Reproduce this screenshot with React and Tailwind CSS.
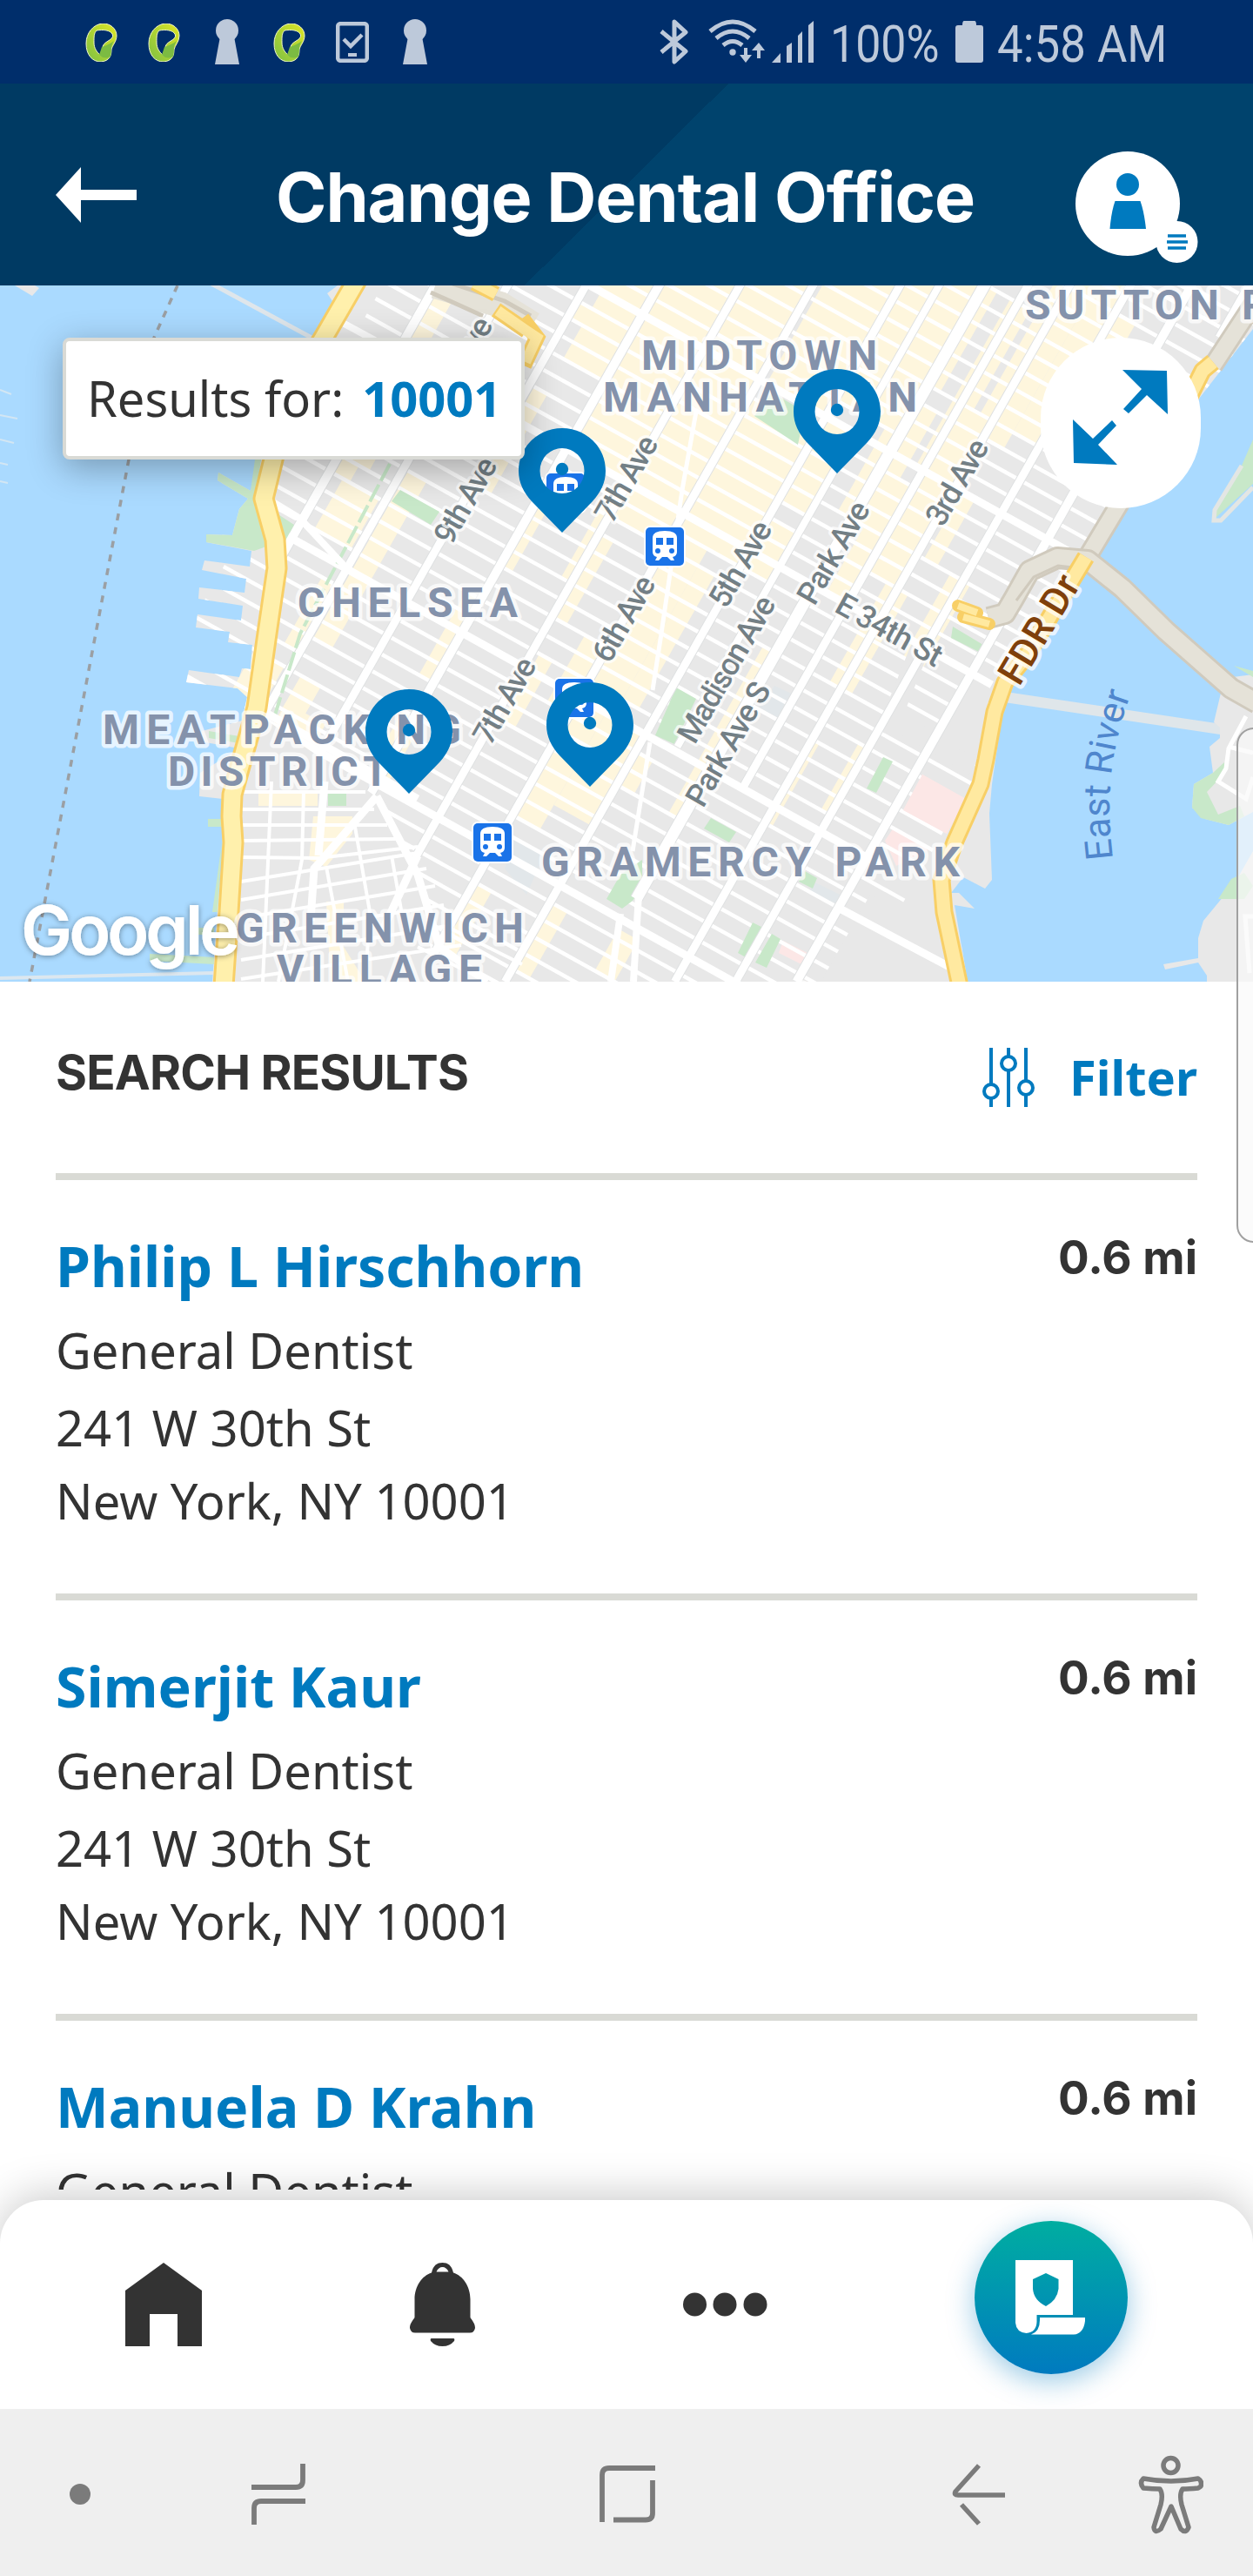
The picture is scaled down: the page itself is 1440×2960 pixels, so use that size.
import React from "react";

/* ---------- map geometry: a slanted street grid ---------- */

const AVE = 0.567;
const ST = 0.555;

function corner(ave, street) {
  const base = 263 + 25.3 * (34 - street);
  const y = (base + ST * (ave - 787)) / (1 + ST * AVE);
  return [ave - AVE * y, y];
}

function block(a1, a2, n1, n2) {
  return [corner(a1, n1), corner(a2, n1), corner(a2, n2), corner(a1, n2)]
    .map(([x, y]) => x.toFixed(1) + "," + y.toFixed(1))
    .join(" ");
}

const avenues = [
  [500, 310, 10], [583, 488, 9], [673, 540, 9], [757, 587, 10], [850, 800, 9],
  [934, 800, 9], [1034, 800, 9], [1079, 530, 8], [1131, 705, 13], [1181, 577, 9],
  [1229, 800, 9], [1299, 800, 9], [1369, 800, 10], [1435, 60, 9],
];

const minorStreets = Array.from({ length: 54 }, (_, i) => i + 8).filter(
  (n) => n !== 14 && n !== 23 && n !== 34 && n !== 42
);
const majorStreets = [14, 23, 34, 42, 57];

const commercial = [
  [505, 530, 27, 38], [520, 575, 24, 27], [512, 545, 28, 32], [545, 580, 30, 33], [590, 618, 19, 29],
  [530, 575, 14, 17], [560, 580, 18, 22], [600, 660, 13, 15.4], [600, 630, 15, 17],
  [673, 757, 42, 47], [695, 757, 38, 42], [673, 730, 40, 41], [680, 700, 30, 36],
  [757, 850, 34, 47], [757, 775, 27, 32], [735, 757, 20, 25], [740, 770, 14, 18],
  [850, 932, 32, 52], [850, 872, 26, 31], [860, 880, 20, 24], [900, 932, 22, 26], [835, 850, 28, 33],
  [932, 1030, 33, 41], [945, 1030, 42, 58], [932, 985, 23, 33], [932, 975, 16, 23], [975, 1034, 17.5, 23],
  [985, 1010, 24, 32], [1034, 1075, 33, 36], [1030, 1127, 43, 60], [1034, 1080, 37, 42], [1040, 1060, 20, 22],
  [1110, 1160, 38, 45], [1127, 1150, 46, 52], [1150, 1181, 34, 41], [1112, 1135, 20, 30], [1170, 1200, 42, 52],
  [1181, 1225, 36, 46], [1210, 1260, 45, 56], [1260, 1300, 46, 58], [1212, 1245, 30, 36], [1225, 1240, 22, 27],
  [1280, 1310, 33, 38], [1240, 1260, 38, 42], [1285, 1295, 24, 28], [1034, 1060, 9, 13], [1130, 1160, 11, 13.5],
  [1215, 1245, 6, 11], [930, 960, 8, 12], [1300, 1330, 46, 54],
];

const land =
  "388,0 376,9 382,18 360,58 330,120 300,200 288,236 251,215 250,224 285,245 275,257 267,287 237,286 237,295 289,305 287,323 235,316 232,327 283,337 281,353 229,347 228,360 279,368 277,385 227,378 225,393 264,398 262,410 290,413 288,441 278,440 275,450 217,442 214,456 273,463 284,473 278,500 232,512 230,524 275,532 230,560 229,587 256,590 256,613 239,613 239,622 255,622 256,650 250,715 244,800 1112,800 1097,712 1120,716 1102,698 1093,698 1107,680 1132,693 1140,683 1137,607 1140,573 1152,490 1163,460 1200,407 1240,335 1255,313 1290,257 1378,130 1440,50 1440,0";

const gridArea = "0,0 1440,0 1440,800 500,800 482,670 433,588 300,495 0,490";

function MapRoad({ d, w, fill, edge }) {
  return (
    <>
      <path d={d} fill="none" stroke={edge} strokeWidth={w} strokeLinejoin="round" />
      <path d={d} fill="none" stroke={fill} strokeWidth={w - 6} strokeLinejoin="round" />
    </>
  );
}

const halo = {
  stroke: "#ffffff",
  strokeOpacity: 0.72,
  strokeWidth: 9,
  strokeLinejoin: "round",
  paintOrder: "stroke",
};

function Area({ x, y, w, children }) {
  return (
    <text x={x} y={y} textLength={w} fontSize="48" fontWeight="700" fill="#8492ab" {...halo}>
      {children}
    </text>
  );
}

function Street({ x, y, r = -60, w, children }) {
  return (
    <text
      transform={`translate(${x} ${y}) rotate(${r})`}
      y="12"
      textAnchor="middle"
      textLength={w}
      fontSize="36"
      fontWeight="500"
      fill="#737f85"
      {...halo}
      strokeWidth="7"
    >
      {children}
    </text>
  );
}

function Station({ x, y }) {
  return (
    <g transform={`translate(${x} ${y})`}>
      <rect x="-2" y="-2" width="48" height="48" rx="7" fill="#fff" />
      <rect width="44" height="44" rx="5" fill="#1a73e8" />
      <path d="M8 12Q8 4 22 4t14 8v16q0 5-5 6l2 4h-4l-4-4h-6l-4 4h-4l2-4q-5-1-5-6z" fill="#fff" />
      <path d="M12 12h8v8h-8zM24 12h8v8h-8z" fill="#1a73e8" />
      <circle cx="14" cy="27" r="3" fill="#1a73e8" />
      <circle cx="30" cy="27" r="3" fill="#1a73e8" />
    </g>
  );
}

function Pin({ x, y }) {
  return (
    <g transform={`translate(${x} ${y})`} fill="#007abf">
      <path
        fillRule="evenodd"
        d="M50 0C77 0 100 21 100 49C100 63 94 74 85 84L50 120L15 84C6 74 0 63 0 49C0 21 23 0 50 0ZM50 23A25.5 26 0 1 0 50 75A25.5 26 0 1 0 50 23Z"
      />
      <circle cx="50" cy="47" r="7.2" />
    </g>
  );
}

function CityMap() {
  return (
    <svg className="block h-[800px] w-[1440px] font-['Roboto',sans-serif]" viewBox="0 0 1440 800">
      <defs>
        <clipPath id="land"><polygon points={land} /></clipPath>
        <clipPath id="grid"><polygon points={gridArea} /></clipPath>
        <path id="river" d="M1279 659C1272 600 1272 545 1300 468" />
        <filter id="soft" x="-10%" y="-20%" width="120%" height="150%">
          <feDropShadow dx="0" dy="1" stdDeviation="3" floodColor="#000" floodOpacity="0.4" />
        </filter>
      </defs>
      <rect width="1440" height="800" fill="#aadaff" />
      <path d="M17 0H40L45 3L37 12Z" fill="#e8e8e8" />
      <path d="M243-2L358 60" stroke="#dfe6eb" strokeWidth="5" />
      <path d="M0 120l13 5M0 149l20 4M0 177l16 4M0 204l9 2M0 225l9 2" stroke="#d3e6f3" strokeWidth="2" />
      <path d="M0 796L245 790" stroke="#dce7ef" strokeWidth="4" />
      <path d="M204 0L177 60L148 200L110 400L53 700L34 800" fill="none" stroke="#9b9fa3" strokeWidth="3.5" strokeDasharray="8 8" />
      <polygon points={land} fill="#e8e8e8" />

      <g clipPath="url(#land)">
        <g clipPath="url(#grid)">
          <g fill="#fef6dd">
            {commercial.map((b, i) => (
              <polygon key={i} points={block(b[0], b[1], b[2], b[3])} />
            ))}
          </g>
          <path d="M592 635L625 655L605 700L580 670ZM890 460L912 470L895 497L873 485ZM935 685L965 700V712L930 697Z" fill="#e2e7ea" />
          <g fill="#fce7e6">
            <path d="M1060 562L1110 590L1088 630L1038 603ZM1027 623L1070 647L1030 667L1017 638ZM900 753L930 768L925 782L895 767Z" />
          </g>
          <g stroke="#fff" strokeWidth="4.5">
            {minorStreets.map((n) => {
              const a = corner(440, n);
              const b = corner(n > 34 ? 1500 : 1440, n);
              return <line key={n} x1={a[0]} y1={a[1]} x2={b[0]} y2={b[1]} />;
            })}
          </g>
          <path d="M1058 415L1025 497L1120 552" fill="none" stroke="#e8e8e8" strokeWidth="22" />
          <path d="M1118 430L1140 440L1128 540L1066 525Z" fill="#e8e8e8" />
          <path d="M935 815L1000 700L1110 760V800Z" fill="#e8e8e8" />
          <path d="M1060 562L1110 590L1088 630L1038 603Z" fill="#fce7e6" />
          <path
            fill="#c8e8c9"
            d="M867 150L887 123L925 145L917 183ZM777 462L800 475L775 527L753 517ZM817 612L846 628L838 640L809 624ZM713 677L738 660V690L727 707L715 716L697 705ZM865 732L877 738L857 772L848 767ZM887 745L897 751L881 784L868 778ZM1015 542L1026 547L1007 583L996 578ZM1095 392L1130 413L1125 421L1093 405ZM460 235L505 260L495 275L450 248ZM925 673L939 681L934 693L918 685Z"
          />
          <g>
            {avenues.map(([a, y, w]) => (
              <line key={a} x1={a + 6} y1="-10" x2={a - AVE * y} y2={y} stroke="#dfe1e2" strokeWidth={w + 2} />
            ))}
            {avenues.map(([a, y, w]) => (
              <line key={a} x1={a + 6} y1="-10" x2={a - AVE * y} y2={y} stroke="#fff" strokeWidth={w} />
            ))}
          </g>
          <g stroke="#fff" strokeWidth="9">
            {majorStreets.map((n) => {
              const a = corner(450, n);
              const b = corner(1400, n);
              return <line key={n} x1={a[0]} y1={a[1]} x2={b[0]} y2={b[1]} />;
            })}
          </g>
          <path d="M800 145L784 235L760 400L750 465M747 525L727 650" fill="none" stroke="#fff" strokeWidth="5" />
          <path d="M713 722L702 800M734 700L728 800" fill="none" stroke="#fff" strokeWidth="8" />
          <path d="M967 717L1095 785" fill="none" stroke="#fff" strokeWidth="9" />
          <path d="M448 205L345 400L314 500" fill="none" stroke="#c8e8c9" strokeWidth="4" strokeDasharray="22 5" />
        </g>

        {/* west village */}
        <path d="M297 582H365V598H297ZM360 610H405V630L375 668L355 660ZM375 708H395V760L420 800H380Z" fill="#fef6dd" />
        <rect x="377" y="584" width="21" height="14" fill="#c8e8c9" />
        <g fill="none" stroke="#fff" strokeWidth="4">
          <path d="M277 582H420M277 602H430M277 620H445M277 638L455 636M277 657L365 658L480 645M277 685L480 652M277 706L490 670M277 727L500 690M277 750L510 712M277 775L520 735M277 797L530 758" />
          <path d="M312 570L302 800M349 580L347 660L320 800M375 668L400 800M408 622L425 720L420 800M450 655L465 740M480 760L560 800M520 740L600 780" />
        </g>
        <g fill="none" stroke="#fff" strokeWidth="9">
          <path d="M433 587L480 677L505 760L560 800M433 587L370 660L361 670L357 730M373 570L366 655M480 655L440 740" />
          <path d="M300 488L380 533L480 590" />
        </g>
      </g>

      <path d="M285 245L275 257L267 287L237 286V295L292 305L306 300L303 280L293 250L300 200H293L288 236L251 215L250 224Z" fill="#c8e8c9" />
      <path d="M315 260L338 275L328 293L322 290ZM239 613H256V622H239ZM240 512L275 518V526L240 520ZM218 738H246V746H218ZM172 768L246 772V780L172 776ZM255 640L250 720L244 720Z" fill="#c8e8c9" />
      <path d="M312 248L345 268L400 327" fill="none" stroke="#fff" strokeWidth="8" strokeLinejoin="round" />
      <path d="M392 42L440 68" stroke="#fff" strokeWidth="8" />
      <MapRoad d="M410-6L373 58L330 130L314 200L303 245L316 292L318 325L307 400L295 485L278 545L267 585L266 610L268 640L263 720L257 805" w={25} fill="#fff0ac" edge="#f8cf66" />

      {/* tunnel ramps */}
      <path d="M500 0L575 22L612 45" fill="none" stroke="#e5e2d8" strokeWidth="30" />
      <path d="M495 8L555 35M520-2L580 18L610 35" fill="none" stroke="#d0cabd" strokeWidth="5" />
      <path d="M545-3L570 10M570 28L605 52M600 38L617 60L602 92" fill="none" stroke="#f8cf66" strokeWidth="18" />
      <path d="M545-3L570 10M572 29L605 52L617 60L604 88" fill="none" stroke="#ffe9a0" strokeWidth="12" />

      {/* east side */}
      <path d="M1155 473L1410 511" stroke="#dfe6ea" strokeWidth="12" />
      <path d="M1440 447L1417 450L1405 460L1395 502L1402 508V520L1390 530L1394 560L1372 573L1370 600L1385 613L1412 620L1440 605ZM1440 650L1420 685L1383 730L1377 750V773L1337 780L1339 786L1377 778L1387 793V800H1440Z" fill="#e8e8e8" />
      <path d="M1407 548L1394 560L1372 573L1370 600L1380 612L1412 620L1430 610L1425 598L1400 608L1387 582L1408 560ZM1415 682L1430 675L1440 690L1430 705L1400 705ZM1418 437L1440 443V450ZM1440 177L1427 207L1395 262L1396 268L1440 228Z" fill="#c8e8c9" />
      <path d="M1427 207L1396 258L1395 270H1403L1440 232" fill="none" stroke="#e3e6e4" strokeWidth="5" />
      <path d="M1432 495L1412 532L1409 555L1400 570L1432 590L1440 565M1412 530L1440 537M1440 725H1431L1436 790" fill="none" stroke="#fff" strokeWidth="5" />
      <MapRoad d="M1440 22L1394 92M1290 245L1248 315" w={24} fill="#e5e2d8" edge="#d0cabd" />
      <MapRoad d="M1394 88L1382 98L1366 130" w={21} fill="#ffe9a0" edge="#f8cf66" />
      <MapRoad d="M1136 382L1155 377L1165 360L1183 328L1215 313L1250 316L1290 348L1340 397L1415 463L1445 480" w={26} fill="#e5e2d8" edge="#d0cabd" />
      <path d="M1168 362L1188 335L1216 322L1250 326" fill="none" stroke="#d0cabd" strokeWidth="3" />
      <MapRoad d="M1248 312L1180 425L1155 456L1143 490L1133 545L1127 573L1097 640L1082 683L1085 720L1103 805" w={21} fill="#ffe9a0" edge="#f8cf66" />
      <path d="M1101 368L1123 376M1107 381L1137 389" stroke="#f8cf66" strokeWidth="14" strokeLinecap="round" />
      <path d="M1101 368L1123 376M1107 381L1137 389" stroke="#ffe9a0" strokeWidth="8" />

      <Street x={530} y={86} w={108}>9th Ave</Street>
      <Street x={535} y={247} w={108}>9th Ave</Street>
      <Street x={720} y={222} w={108}>7th Ave</Street>
      <Street x={851} y={320} w={108}>5th Ave</Street>
      <Street x={717} y={383} w={108}>6th Ave</Street>
      <Street x={958} y={307} w={130}>Park Ave</Street>
      <Street x={1100} y={226} w={108}>3rd Ave</Street>
      <Street x={580} y={477} w={108}>7th Ave</Street>
      <Street x={835} y={441} w={188}>Madison Ave</Street>
      <Street x={837} y={527} w={158}>Park Ave S</Street>
      <Street x={898} y={848} w={108}>1st Ave</Street>
      <Street x={1022} y={396} r={29} w={134}>E 34th St</Street>
      <text transform="translate(1194 395) rotate(-59)" y="15" textAnchor="middle" textLength="138" fontSize="44" fontWeight="500" fill="#7f400b" {...halo}>
        FDR Dr
      </text>
      <text fontSize="43" fill="#4f86cd" letterSpacing="0.3">
        <textPath href="#river">East River</textPath>
      </text>

      <Area x={1178} y={39} w={280}>SUTTON P</Area>
      <Area x={737} y={97} w={271}>MIDTOWN</Area>
      <Area x={693} y={145} w={361}>MANHATTAN</Area>
      <Area x={342} y={381} w={253}>CHELSEA</Area>
      <Area x={118} y={527} w={412}>MEATPACKING</Area>
      <Area x={193} y={575} w={254}>DISTRICT</Area>
      <Area x={622} y={679} w={481}>GRAMERCY PARK</Area>
      <Area x={271} y={755} w={331}>GREENWICH</Area>
      <Area x={318} y={803} w={236}>VILLAGE</Area>

      <Station x={628} y={216} />
      <Station x={742} y={278} />
      <Station x={638} y={452} />
      <Station x={544} y={618} />
      <Pin x={596} y={164} />
      <Pin x={912} y={96} />
      <Pin x={628} y={456} />
      <Pin x={420} y={464} />

      <text x="24" y="769" textLength="252" fontSize="79" fontWeight="600" fill="#fff" filter="url(#soft)" className="font-['Inter',sans-serif]">
        Google
      </text>
    </svg>
  );
}

/* ---------- status bar ---------- */

function RibbonIcon() {
  return (
    <svg className="h-[44px] w-[37px]" viewBox="0 0 37 44">
      <defs>
        <linearGradient id="lime" x1="0" y1="1" x2="1" y2="0">
          <stop offset="0" stopColor="#7cc043" />
          <stop offset="1" stopColor="#e0e625" />
        </linearGradient>
      </defs>
      <path
        d="M20 0C9 1 1 11 1 23C1 36 8 44 18 44C28 43 30 37 30 30C31 25 36 21 36 14C36 6 29 0 20 0ZM13 8C20 7 29 7 31.500 13C33 20 19 20 20 29C20 34 21 37 18 37C13 33 10 28 10 22C10 15 10 11 13 8Z"
        fillRule="evenodd"
        fill="url(#lime)"
        stroke="#f1f7c8"
        strokeWidth="1"
      />
      <path d="M19 27L16 36Q22 42 29 38C31 32 28 28 33 20Q28 24 19 27Z" fill="#7cbb42" />
    </svg>
  );
}

function KeyholeIcon() {
  return (
    <svg className="h-[52px] w-[28px]" viewBox="0 0 28 52" fill="#bdc9da">
      <circle cx="14" cy="13" r="13" />
      <path d="M6 20H22L28 52H0Z" />
    </svg>
  );
}

function StatusBar() {
  return (
    <div className="flex h-[96px] items-start bg-[#002e6b] pl-[98px] text-[#bdc9da]">
      <div className="flex w-[660px] items-start">
        <div className="mt-[27px]"><RibbonIcon /></div>
        <div className="mt-[27px] ml-[35px]"><RibbonIcon /></div>
        <div className="mt-[22px] ml-[40px]"><KeyholeIcon /></div>
        <div className="mt-[27px] ml-[39px]"><RibbonIcon /></div>
        <svg className="mt-[25px] ml-[35px] h-[47px] w-[38px]" viewBox="0 0 38 47" fill="none" stroke="#bdc9da" strokeWidth="4.5">
          <rect x="2.2" y="2.2" width="33.6" height="42.6" rx="3" />
          <path d="M9 20L17 28L30 15" />
          <path d="M14 38H24" strokeWidth="4" />
        </svg>
        <div className="mt-[22px] ml-[39px]"><KeyholeIcon /></div>
      </div>
      <svg className="mt-[22px] h-[52px] w-[34px]" viewBox="0 0 34 52" fill="none" stroke="#bdc9da" strokeWidth="5">
        <path d="M2 14L30 37L17 49V3L30 15L2 38" strokeLinejoin="round" />
      </svg>
      <svg className="mt-[22px] ml-[20px] h-[52px] w-[70px]" viewBox="0 0 70 52" fill="none" stroke="#bdc9da" strokeWidth="5">
        <path d="M4 14Q30-8 56 14M11 22Q30 6 49 22M19 30Q30 21 41 30" />
        <circle cx="30" cy="38" r="3.7" fill="#bdc9da" stroke="none" />
        <path d="M45 33V46M60 45V32" strokeWidth="4" />
        <path d="M38 41H52L45 50ZM52 36H67L60 27Z" fill="#bdc9da" stroke="none" />
      </svg>
      <svg className="mt-[24px] ml-[5px] h-[48px] w-[50px]" viewBox="0 0 50 48" fill="#bdc9da">
        <path d="M0 48L10 37V48ZM17 29L23 25V48H17ZM30 17L35 12V48H30ZM42 5L48 0V48H42Z" />
      </svg>
      <div className="mt-[16px] ml-[17px] w-[144px]">
        <span className="inline-block origin-left scale-x-[0.865] font-['Roboto',sans-serif] text-[60px] leading-[70px] whitespace-nowrap">100%</span>
      </div>
      <svg className="mt-[24px] h-[48px] w-[32px]" viewBox="0 0 32 48" fill="#bdc9da">
        <path d="M10 0H22Q24 0 24 5H29Q32 5 32 8V45Q32 48 29 48H3Q0 48 0 45V8Q0 5 3 5H8Q8 0 10 0Z" />
      </svg>
      <div className="mt-[16px] ml-[16px] w-[200px]">
        <span className="inline-block origin-left scale-x-[0.88] font-['Roboto',sans-serif] text-[60px] leading-[70px] whitespace-nowrap">4:58 AM</span>
      </div>
    </div>
  );
}

function Header() {
  return (
    <header className="flex h-[232px] items-start bg-[linear-gradient(135.3deg,#003a63_50%,#00436d_50%)] pl-[64px]">
      <svg className="mt-[96px] h-[64px] w-[93px]" viewBox="0 0 93 64" fill="#fff">
        <path d="M0 32L29 0V26H93V38H29V64Z" />
      </svg>
      <h1 className="mt-[85px] ml-[160px] w-[919px] font-['Inter',sans-serif] text-[79px] leading-[90px] font-bold tracking-[-1px] whitespace-nowrap text-white">
        Change Dental Office
      </h1>
      <svg className="mt-[78px] h-[130px] w-[142px] shrink-0" viewBox="0 0 142 130">
        <circle cx="60" cy="60" r="60" fill="#fff" />
        <circle cx="60" cy="38" r="13" fill="#007abf" />
        <path d="M45.500 57H74.500Q79 70 81 89H39.500Q41 70 45.500 57Z" fill="#007abf" />
        <circle cx="116.500" cy="104" r="24" fill="#fff" />
        <path d="M106 97H127M105 104H129M106 111H127" stroke="#007abf" strokeWidth="3.700" />
      </svg>
    </header>
  );
}

const dentists = [
  { name: "Philip L Hirschhorn", distance: "0.6 mi" },
  { name: "Simerjit Kaur", distance: "0.6 mi" },
  { name: "Manuela D Krahn", distance: "0.6 mi" },
];

function DentistRow({ name, distance }) {
  return (
    <li className="flex h-[483px] shrink-0 items-start justify-between border-t-8 border-[#d9dad5] pt-[56px]">
      <div className="text-[56.1px] leading-[84px] text-[#333333]">
        <h3 className="text-[64.4px] leading-[84px] font-bold text-[#007abf]">{name}</h3>
        <p className="mt-[13px]">General Dentist</p>
        <p className="mt-[5px]">241 W 30th St</p>
        <p>New York, NY 10001</p>
      </div>
      <span className="mt-[3px] font-['Inter',sans-serif] text-[53px] leading-[60px] font-bold text-[#333333]">{distance}</span>
    </li>
  );
}

function BottomNav() {
  return (
    <nav className="relative mt-[12px] flex h-[240px] items-start rounded-t-[50px] bg-white pl-[144px] shadow-[0_-4px_50px_rgba(0,0,0,0.22)]">
      <svg className="mt-[72px] h-[96px] w-[88px]" viewBox="0 0 88 96" fill="#333">
        <path d="M44 0L88 32V96H60V59H28V96H0V32Z" />
      </svg>
      <svg className="mt-[72px] ml-[239px] h-[96px] w-[75px]" viewBox="0 0 75 96" fill="#333">
        <path d="M5.500 42C5.500 27 14 15 25 11.500C27 3 31 0 37.500 0S48 3 50 11.500C61 15 69.500 27 69.500 42V63C72 67 75 70 75 75Q74 80.500 69 80.500H6Q1 80.500 0 75C0 70 3 67 5.500 63ZM30.500 10.500H44.500Q42 5 37.500 5T30.500 10.500Z" fillRule="evenodd" />
        <path d="M25 87H50Q52 87 51 90Q46 96 37.500 96T24 90Q23 87 25 87Z" />
      </svg>
      <svg className="mt-[106px] ml-[239px] h-[28px] w-[98px]" viewBox="0 0 98 28" fill="#333">
        <circle cx="13.500" cy="14" r="13.500" />
        <circle cx="48" cy="14" r="13.500" />
        <circle cx="83" cy="14" r="13.500" />
      </svg>
      <div className="mt-[24px] ml-[237px] h-[176px] w-[176px] rounded-full bg-linear-to-b from-[#00ada0] to-[#007abf] shadow-[0_8px_32px_rgba(0,122,191,0.4)]">
        <svg className="block h-[176px] w-[176px]" viewBox="0 0 176 176" fill="#fff">
          <path
            fillRule="evenodd"
            d="M47 45H113V108H71.500V116Q71 128 59.500 129Q48 128 47 117ZM82 60L67 67V78Q68 91 82 98Q95 91 96.500 78V67Z"
          />
          <path d="M75 111H127V115Q125 130 114 130.500H65Q75 127 75 114Z" />
        </svg>
      </div>
    </nav>
  );
}

function SystemBar() {
  return (
    <div className="relative flex h-[192px] items-start bg-[#efefef] pl-[80px]">
      <div className="mt-[86px] h-[24px] w-[24px] rounded-full bg-[#7b7b7b]" />
      <svg className="mt-[62px] ml-[183px] h-[74px] w-[66px]" viewBox="-2 0 66 74" fill="none" stroke="#7b7b7b" strokeWidth="5.800">
        <path d="M59 1V20Q59 28 51 28H0M62 44H11Q3 44 3 52V71" />
      </svg>
      <svg className="mt-[62px] ml-[333px] h-[74px] w-[70px]" viewBox="-3 0 70 74" fill="none" stroke="#7b7b7b" strokeWidth="5.800">
        <path d="M3 68V14Q3 6 11 6H64M61 20V58Q61 65.500 53 65.500H16" />
      </svg>
      <svg className="mt-[62px] ml-[334px] h-[74px] w-[70px]" viewBox="-3 0 70 74" fill="none" stroke="#7b7b7b" strokeWidth="5.500">
        <path d="M32 3L5 33Q3 37 8 37H62M12 48L32 70" strokeLinejoin="round" />
      </svg>
      <svg className="mt-[52px] ml-[143px] h-[92px] w-[80px]" viewBox="-3 0 80 92" fill="none" stroke="#7b7b7b" strokeWidth="5.500">
        <circle cx="39.500" cy="13" r="8.500" />
        <path
          d="M8 28Q40 34 71 28Q76 31 74 37L71 39Q60 40 53 40Q49 46 52 58L60 84Q57 92 51 86L40 60L28 86Q21 92 20 84L28 58Q31 46 27 40Q19 40 8 39Q3 33 8 28Z"
          strokeLinejoin="round"
        />
      </svg>
    </div>
  );
}

export default function App() {
  return (
    <div className="relative h-[2960px] w-[1440px] overflow-hidden bg-white font-['Noto_Sans',sans-serif]">
      <StatusBar />
      <Header />

      <section className="relative h-[800px] overflow-hidden">
        <CityMap />
        <div className="absolute top-[60px] left-[72px] flex h-[140px] w-[531px] items-center rounded-[8px] border-4 border-[#d9dad5] bg-white pl-[24px] text-[56px] whitespace-nowrap text-[#333333] shadow-[0_10px_40px_rgba(0,0,0,0.3)]">
          <span className="-mt-[2px]">Results for:</span>
          <span className="-mt-[2px] ml-[21px] font-bold text-[#007abf]">10001</span>
        </div>
        <div className="absolute top-[60px] left-[1196px] h-[196px] w-[184px] rounded-[92px] bg-white">
          <svg className="h-[196px] w-[184px]" viewBox="0 0 184 196" fill="#007abf">
            <path d="M94 37L145 38L146 88L122 66L101 87L95 82L116 59ZM37 94L60 116L82 95L87 101L66 123L88 146L38 144Z" />
          </svg>
        </div>
      </section>

      <main className="h-[1388px] overflow-hidden px-[64px]">
        <div className="flex h-[220px] items-start justify-between">
          <h2 className="mt-[74px] font-['Inter',sans-serif] text-[55px] leading-[60px] font-bold tracking-[-0.85px] text-[#333333]">
            SEARCH RESULTS
          </h2>
          <div className="flex items-start">
            <svg className="mt-[76px] h-[68px] w-[60px]" viewBox="0 0 60 68" fill="none" stroke="#007abf" strokeWidth="4">
              <path d="M10 0V41M10 59V68M30 0V9M30 27V68M50 0V37M50 55V68" />
              <circle cx="10" cy="50" r="8" />
              <circle cx="30" cy="18" r="8" />
              <circle cx="50" cy="46" r="8" />
            </svg>
            <span className="mt-[67px] ml-[40px] text-[56px] leading-[84px] font-bold text-[#007abf]">Filter</span>
          </div>
        </div>
        <ul>
          {dentists.map((d) => (
            <DentistRow key={d.name} name={d.name} distance={d.distance} />
          ))}
        </ul>
      </main>

      <BottomNav />
      <SystemBar />

      {/* edge panel handle */}
      <div className="absolute top-[836px] left-[1421px] h-[592px] w-[40px] rounded-[22px] border-2 border-[#a0a0a0] bg-[#fafafa]/70" />
    </div>
  );
}
